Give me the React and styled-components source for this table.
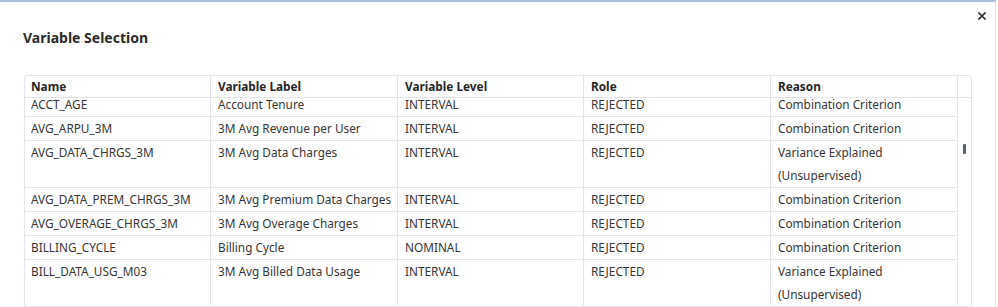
import React, { useEffect, useRef } from "react";
import styled, { createGlobalStyle } from "styled-components";

const GlobalStyle = createGlobalStyle`
  html, body {
    margin: 0;
    padding: 0;
    background: #ffffff;
    overflow: hidden;
  }
  body {
    font-family: "Noto Sans", "Open Sans", sans-serif;
  }
`;

const columns = ["Name", "Variable Label", "Variable Level", "Role", "Reason"];

const rows = [
  ["ACCT_AGE", "Account Tenure", "INTERVAL", "REJECTED", "Combination Criterion"],
  ["AVG_ARPU_3M", "3M Avg Revenue per User", "INTERVAL", "REJECTED", "Combination Criterion"],
  ["AVG_DATA_CHRGS_3M", "3M Avg Data Charges", "INTERVAL", "REJECTED", "Variance Explained (Unsupervised)"],
  ["AVG_DATA_PREM_CHRGS_3M", "3M Avg Premium Data Charges", "INTERVAL", "REJECTED", "Combination Criterion"],
  ["AVG_OVERAGE_CHRGS_3M", "3M Avg Overage Charges", "INTERVAL", "REJECTED", "Combination Criterion"],
  ["BILLING_CYCLE", "Billing Cycle", "NOMINAL", "REJECTED", "Combination Criterion"],
  ["BILL_DATA_USG_M03", "3M Avg Billed Data Usage", "INTERVAL", "REJECTED", "Variance Explained (Unsupervised)"],
  ["BILL_DATA_USG_M06", "6M Avg Billed Data Usage", "INTERVAL", "REJECTED", "Combination Criterion"],
  ["BILL_DATA_USG_M09", "9M Avg Billed Data Usage", "INTERVAL", "REJECTED", "Combination Criterion"],
];

function App() {
  const bodyRef = useRef(null);

  useEffect(() => {
    // list is scrolled a few pixels, first row sits partly under the header
    if (bodyRef.current) bodyRef.current.scrollTop = 5;
  }, []);

  return (
    <>
      <GlobalStyle />
      <Dialog>
        <CloseButton aria-label="Close">
          <svg width="8" height="8" viewBox="0 0 8 8">
            <path d="M1 1 L7 7 M7 1 L1 7" stroke="#2b2b2b" strokeWidth="1.6" strokeLinecap="square" />
          </svg>
        </CloseButton>
        <Title>Variable Selection</Title>
        <Table>
          <HeaderRow>
            {columns.map((c) => (
              <HeadCell key={c}>{c}</HeadCell>
            ))}
            <HeadCell />
          </HeaderRow>
          <Body>
            <Rows ref={bodyRef}>
              {rows.map((r) => (
                <Row key={r[0]}>
                  {r.map((v, i) => (
                    <Cell key={i}>{v}</Cell>
                  ))}
                </Row>
              ))}
            </Rows>
            <ScrollTrack>
              <Thumb />
            </ScrollTrack>
          </Body>
        </Table>
      </Dialog>
    </>
  );
}

export default App;

const Dialog = styled.div`
  position: relative;
  width: 996px;
  height: 307px;
  box-sizing: border-box;
  border-top: 2px solid #a9c1de;
  border-right: 1px solid #dfe2e7;
  padding: 0 0 0 24px;
  display: flex;
  flex-direction: column;
  overflow: hidden;
`;

const CloseButton = styled.button`
  position: absolute;
  top: 8px;
  right: 6px;
  width: 14px;
  height: 12px;
  padding: 0;
  border: none;
  background: none;
  display: flex;
  align-items: center;
  justify-content: center;
  cursor: pointer;
`;

const Title = styled.h2`
  margin: 27px 0 0 -1px;
  font-size: 14px;
  line-height: 18px;
  font-weight: 700;
  color: #2b2b2b;
`;

const Table = styled.div`
  margin-top: 28px;
  width: 948px;
  height: 260px;
  box-sizing: border-box;
  border: 1px solid #e4e5ea;
  border-radius: 4px 4px 0 0;
  display: flex;
  flex-direction: column;
  overflow: hidden;
  font-size: 11.8px;
`;

const grid = `186px 187px 186px 187px 187px 13px`;

const HeaderRow = styled.div`
  display: grid;
  grid-template-columns: ${grid};
  border-bottom: 1px solid #e4e5ea;
  flex: none;
`;

const HeadCell = styled.div`
  height: 21px;
  line-height: 21px;
  padding: 0 4px 0 6px;
  box-sizing: border-box;
  border-right: 1px solid #e4e5ea;
  font-weight: 700;
  color: #262626;
  white-space: nowrap;
  &:not(:first-child) {
    padding-left: 7px;
  }
  &:last-child {
    border-right: none;
  }
`;

const Body = styled.div`
  display: flex;
  flex: 1;
  min-height: 0;
`;

const Rows = styled.div`
  width: 933px;
  overflow: hidden;
`;

const Row = styled.div`
  display: grid;
  grid-template-columns: 186px 187px 186px 187px 187px;
  border-bottom: 1px solid #e4e5ea;
`;

const Cell = styled.div`
  padding: 0 3px 0 6px;
  line-height: 23px;
  box-sizing: border-box;
  border-right: 1px solid #e4e5ea;
  color: #363636;
  &:not(:first-child) {
    padding-left: 7px;
  }
`;

const ScrollTrack = styled.div`
  width: 13px;
  display: flex;
  justify-content: center;
`;

const Thumb = styled.div`
  margin-top: 46px;
  width: 3px;
  height: 10px;
  border-radius: 1px;
  background: #5d6470;
`;
